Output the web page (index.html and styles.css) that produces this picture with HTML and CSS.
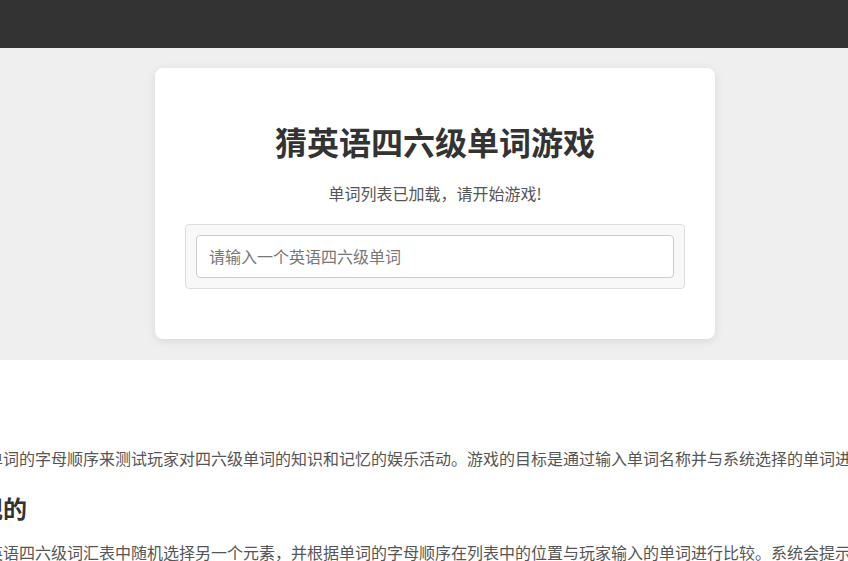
FILE: index.html
```html
<!DOCTYPE html>
<html lang="zh-CN">
<head>
<meta charset="utf-8">
<title>猜英语四六级单词游戏</title>
<link rel="stylesheet" href="styles.css">
</head>
<body>
<header class="topbar"></header>
<section class="hero">
  <div class="card">
    <h1 class="title">猜英语四六级单词游戏</h1>
    <p class="status">单词列表已加载，请开始游戏!</p>
    <div class="panel">
      <input class="word-input" type="text" placeholder="请输入一个英语四六级单词">
    </div>
  </div>
</section>
<section class="intro">
  <div class="content">
    <h2>游戏简介</h2>
    <p>这是一种通过猜测单词的字母顺序来测试玩家对四六级单词的知识和记忆的娱乐活动。游戏的目标是通过输入单词名称并与系统选择的单词进行比较，逐步缩小范围，最终猜出正确的单词。</p>
    <h2>它是如何实现的</h2>
    <p>游戏程序首先会从英语四六级词汇表中随机选择另一个元素，并根据单词的字母顺序在列表中的位置与玩家输入的单词进行比较。系统会提示玩家答案在输入单词之前还是之后。</p>
  </div>
</section>
</body>
</html>
```

FILE: styles.css
```css
html, body {
  margin: 0;
  padding: 0;
  background: #fff;
  overflow-x: hidden;
}

body {
  font-family: "Noto Sans CJK SC", "Noto Sans", "Liberation Sans", sans-serif;
  color: #444;
}

.topbar {
  height: 48px;
  background: #333;
}

.hero {
  background: #efefef;
  padding: 20px 0 21px 22px;
  display: flex;
  justify-content: center;
}

.card {
  width: 560px;
  flex: none;
  box-sizing: border-box;
  background: #fff;
  border-radius: 8px;
  box-shadow: 0 2px 10px rgba(0, 0, 0, 0.1);
  padding: 30px 30px 50px;
  text-align: center;
}

.title {
  margin: 24px 0 0;
  font-size: 32px;
  line-height: 38px;
  font-weight: 700;
  color: #333;
}

.status {
  margin: 21px 0 19px;
  font-size: 16px;
  line-height: 24px;
  color: #555;
}

.panel {
  background: #f8f8f8;
  border: 1px solid #ddd;
  border-radius: 4px;
  padding: 10px;
}

.word-input {
  display: block;
  width: 100%;
  height: 43px;
  box-sizing: border-box;
  border: 1px solid #ccc;
  border-radius: 4px;
  padding: 0 12px 2px;
  font-family: inherit;
  font-size: 16px;
  color: #333;
  background: #fff;
  outline: none;
}

.word-input::placeholder {
  color: #777;
}

.intro {
  display: flex;
  justify-content: center;
  padding-top: 16px;
}

.content {
  flex: none;
  width: 1130px;
}

.content h2 {
  margin: 22px 0 16px;
  font-size: 24px;
  line-height: 32px;
  font-weight: 700;
  color: #333;
  white-space: nowrap;
}

.content p {
  margin: 0 0 16px;
  font-size: 16px;
  line-height: 24px;
  color: #555;
  white-space: nowrap;
}
```
